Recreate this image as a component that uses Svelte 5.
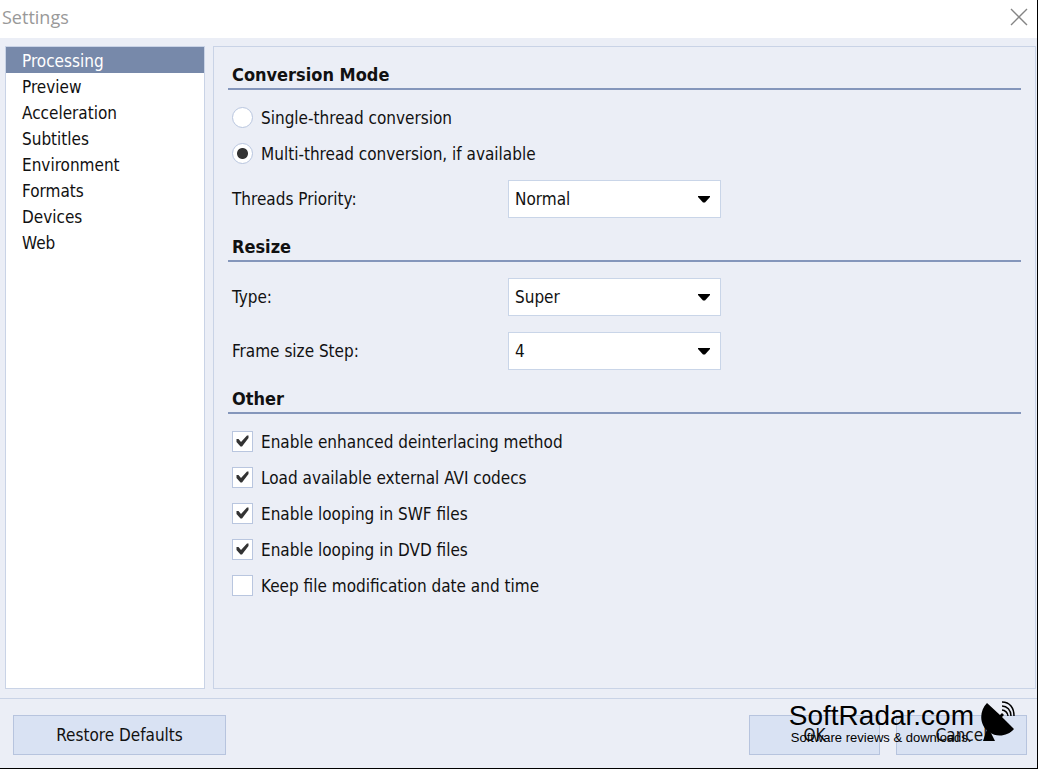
<script lang="ts">
  const pages = [
    'Processing',
    'Preview',
    'Acceleration',
    'Subtitles',
    'Environment',
    'Formats',
    'Devices',
    'Web',
  ];

  let activePage = $state('Processing');
  let mode = $state('multi');
  let priority = $state('Normal');
  let resizeType = $state('Super');
  let frameStep = $state('4');

  let options = $state([
    { id: 'deinterlace', label: 'Enable enhanced deinterlacing method', checked: true },
    { id: 'avi', label: 'Load available external AVI codecs', checked: true },
    { id: 'swf', label: 'Enable looping in SWF files', checked: true },
    { id: 'dvd', label: 'Enable looping in DVD files', checked: true },
    { id: 'dates', label: 'Keep file modification date and time', checked: false },
  ]);

  function restoreDefaults() {
    mode = 'multi';
    priority = 'Normal';
    resizeType = 'Super';
    frameStep = '4';
    options.forEach((o) => (o.checked = o.id !== 'dates'));
  }
</script>

{#snippet arrow()}
  <svg class="arrow" width="12" height="7" viewBox="0 0 12 7" aria-hidden="true">
    <path d="M0 0h12v1L7 6.500H5L0 1z" />
  </svg>
{/snippet}

<div class="window">
  <header>
    <span class="title">Settings</span>
    <button class="close" aria-label="Close">
      <svg width="18" height="18" viewBox="0 0 18 18">
        <path d="M1 1l16 16M17 1L1 17" fill="none" stroke="#858585" stroke-width="1.400" />
      </svg>
    </button>
  </header>

  <div class="content">
    <nav>
      {#each pages as page}
        <button class="page" class:active={page === activePage} onclick={() => (activePage = page)}>
          {page}
        </button>
      {/each}
    </nav>

    <main>
      <section>
        <h2>Conversion Mode</h2>
        <div class="options">
          <label class="option">
            <input type="radio" name="mode" value="single" bind:group={mode} />
            <span>Single-thread conversion</span>
          </label>
          <label class="option">
            <input type="radio" name="mode" value="multi" bind:group={mode} />
            <span>Multi-thread conversion, if available</span>
          </label>
        </div>
        <div class="field">
          <label for="priority">Threads Priority:</label>
          <div class="select">
            <select id="priority" bind:value={priority}>
              <option>Low</option>
              <option>Normal</option>
              <option>High</option>
            </select>
            {@render arrow()}
          </div>
        </div>
      </section>

      <section>
        <h2>Resize</h2>
        <div class="fields">
          <div class="field">
            <label for="type">Type:</label>
            <div class="select">
              <select id="type" bind:value={resizeType}>
                <option>Fast</option>
                <option>Super</option>
              </select>
              {@render arrow()}
            </div>
          </div>
          <div class="field">
            <label for="step">Frame size Step:</label>
            <div class="select">
              <select id="step" bind:value={frameStep}>
                <option>2</option>
                <option>4</option>
                <option>8</option>
              </select>
              {@render arrow()}
            </div>
          </div>
        </div>
      </section>

      <section>
        <h2>Other</h2>
        <div class="options">
          {#each options as o (o.id)}
            <label class="option">
              <span class="check">
                <input type="checkbox" bind:checked={o.checked} />
                {#if o.checked}
                  <svg width="13" height="12" viewBox="0 0 13 12" aria-hidden="true">
                    <path d="M0.500 4L2.500 4l2.500 3L11 0.500h1.500V3L6 11.500H4.500L0.500 7z" fill="#333" />
                  </svg>
                {/if}
              </span>
              <span>{o.label}</span>
            </label>
          {/each}
        </div>
      </section>
    </main>
  </div>

  <footer>
    <button class="action wide" onclick={restoreDefaults}>Restore Defaults</button>
    <div class="confirm">
      <button class="action">OK</button>
      <button class="action">Cancel</button>
    </div>
  </footer>

  <div class="watermark">
    <div>
      <div class="brand">SoftRadar.com</div>
      <div class="tagline">Software reviews &amp; downloads.</div>
    </div>
    <svg width="34" height="41" viewBox="0 0 34 41" aria-hidden="true">
      <path d="M6 2L19 14l2-2 2 2-2 2 12 12C27 35 16 37 8 31C-2 24-2 10 6 2z" />
      <path d="M6 28l4 4 4 8H2z" />
      <g fill="none" stroke="#000" stroke-width="1.500">
        <path d="M21 9c3 0 6 3 6 6" />
        <path d="M21 5c5 0 9 4 9 10" />
        <path d="M21 1c8 0 12 6 12 14" />
      </g>
    </svg>
  </div>
</div>

<style>
  :global(body) {
    margin: 0;
  }

  .window {
    position: relative;
    display: flex;
    flex-direction: column;
    box-sizing: border-box;
    min-height: 100vh;
    border-right: 1px solid #000;
    border-bottom: 1px solid #000;
    background: #ebeef6;
    color: #111;
    font-family: Tahoma, 'DejaVu Sans Condensed', 'Noto Sans', sans-serif;
    font-size: 17px;
    line-height: 24px;
  }

  button,
  select {
    font: inherit;
    color: inherit;
  }

  header {
    display: flex;
    align-items: center;
    justify-content: space-between;
    height: 38px;
    padding: 0 9px 5px 2px;
    box-sizing: border-box;
    background: #fff;
  }
  .title {
    color: #999;
    font-family: 'Open Sans', sans-serif;
    font-size: 18px;
  }
  .close {
    display: flex;
    padding: 0;
    border: 0;
    background: none;
  }

  .content {
    display: flex;
    flex: 1;
    gap: 8px;
    padding: 8px 1px 9px 5px;
  }

  nav {
    display: flex;
    flex-direction: column;
    flex: 0 0 198px;
    border: 1px solid #c9d3e6;
    background: #fff;
  }
  .page {
    height: 26px;
    padding: 1px 16px 0;
    border: 0;
    background: none;
    line-height: 26px;
    text-align: left;
  }
  .page.active {
    background: #7789aa;
    color: #fff;
  }

  main {
    display: flex;
    flex: 1;
    flex-direction: column;
    gap: 17px;
    padding: 16px 14px;
    border: 1px solid #c9d3e6;
  }

  h2 {
    margin: 0;
    padding: 0 4px 1px;
    border-bottom: 2px solid #8496bb;
    font-size: 18px;
    font-weight: 700;
    line-height: 24px;
  }

  .options {
    padding: 9px 4px 0;
  }
  .option {
    display: flex;
    align-items: center;
    gap: 8px;
    height: 36px;
  }
  .option > span:last-child {
    padding-top: 2px;
  }

  input {
    width: 21px;
    height: 21px;
    margin: 0;
    box-sizing: border-box;
    appearance: none;
    border: 1px solid #b9c6df;
    background: #fff;
  }
  input[type='radio'] {
    border-radius: 50%;
  }
  input[type='radio']:checked {
    background: radial-gradient(circle, #333 5px, #fff 6px);
  }
  .check {
    display: grid;
    place-items: center;
  }
  .check > * {
    grid-area: 1 / 1;
    pointer-events: none;
  }

  .fields {
    display: flex;
    flex-direction: column;
    gap: 16px;
    padding-top: 16px;
  }
  .field {
    display: flex;
    align-items: center;
    padding-left: 4px;
  }
  .options + .field {
    padding-top: 9px;
  }
  .field label {
    width: 276px;
  }
  .select {
    display: grid;
    align-items: center;
    width: 213px;
  }
  .select :global(> *) {
    grid-area: 1 / 1;
  }
  select {
    width: 100%;
    height: 38px;
    padding: 0 30px 0 6px;
    appearance: none;
    border: 1px solid #c9d5e8;
    border-radius: 0;
    background: #fff;
  }
  .arrow {
    justify-self: end;
    margin-right: 11px;
    pointer-events: none;
  }

  footer {
    display: flex;
    justify-content: space-between;
    padding: 16px 10px 13px 13px;
    border-top: 1px solid #c9d3e6;
  }
  .confirm {
    display: flex;
    gap: 16px;
  }
  .action {
    width: 131px;
    height: 40px;
    padding: 0;
    border: 1px solid #b7c4de;
    background: #d9e2f3;
  }
  .wide {
    width: 213px;
  }

  .watermark {
    position: absolute;
    right: 22px;
    bottom: 23px;
    display: flex;
    gap: 7px;
    color: #000;
    font-family: 'Liberation Sans', sans-serif;
    pointer-events: none;
  }
  .brand {
    font-size: 28px;
    line-height: 30px;
  }
  .tagline {
    padding-left: 2px;
    font-size: 13px;
    line-height: 14px;
  }
</style>
